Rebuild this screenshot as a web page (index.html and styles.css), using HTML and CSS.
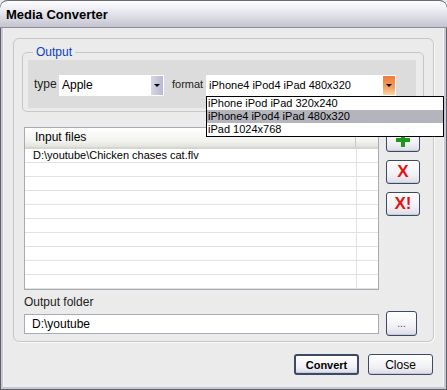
FILE: index.html
```html
<!DOCTYPE html>
<html lang="en">
<head>
    <meta charset="UTF-8">
    <title>Media Converter</title>
    <link rel="stylesheet" href="styles.css">
</head>
<body>
    <div class="window">
        <div class="titlebar">Media Converter</div>
        <div class="client">
            <div class="group">
                <fieldset class="output">
                    <legend>Output</legend>
                    <div class="output-row">
                        <span class="lbl lbl-type">type</span>
                        <div class="combo combo-type">
                            <span class="combo-text">Apple</span>
                            <span class="drop"><i></i></span>
                        </div>
                        <span class="lbl lbl-format">format</span>
                        <div class="combo combo-format">
                            <span class="combo-text">iPhone4 iPod4 iPad 480x320</span>
                            <span class="drop hot"><i></i></span>
                            <ul class="droplist">
                                <li>iPhone iPod iPad 320x240</li>
                                <li class="selected">iPhone4 iPod4 iPad 480x320</li>
                                <li>iPad 1024x768</li>
                            </ul>
                        </div>
                    </div>
                </fieldset>

                <div class="files-row">
                    <div class="listview">
                        <div class="lv-head">
                            <span class="lv-col">Input files</span>
                            <span class="lv-rest"></span>
                        </div>
                        <div class="lv-body">
                            <div class="lv-column">
                                <div class="lv-item">D:\youtube\Chicken chases cat.flv</div>
                            </div>
                        </div>
                    </div>
                    <div class="side-buttons">
                        <button class="btn side-btn">
                            <svg width="14" height="14" viewBox="0 0 14 14"><path d="M5 0h4v5h5v4H9v5H5V9H0V5h5z" fill="#1a9a1a"/></svg>
                        </button>
                        <button class="btn side-btn red">X</button>
                        <button class="btn side-btn red">X!</button>
                    </div>
                </div>

                <div class="folder-label">Output folder</div>
                <div class="folder-row">
                    <div class="textbox">D:\youtube</div>
                    <button class="btn browse">...</button>
                </div>
            </div>

            <div class="actions">
                <button class="btn action default">Convert</button>
                <button class="btn action">Close</button>
            </div>
        </div>
    </div>
</body>
</html>
```

FILE: styles.css
```css
body {
    margin: 0;
    background-color: #ebebeb;
    font-family: "Liberation Sans", Arial, sans-serif;
    font-size: 11px;
    color: #000;
}
.window {
    width: 447px;
    height: 390px;
    box-sizing: border-box;
    display: flex;
    flex-direction: column;
    background-color: #ebebeb;
    border: 1px solid #5f5f6a;
    border-top: none;
    border-radius: 8px 8px 0 0;
}
.titlebar {
    height: 28px;
    box-sizing: border-box;
    padding: 6px 0 0 6px;
    border-top: 1px solid #6a6a76;
    border-bottom: 1px solid #8e8e9a;
    border-radius: 8px 8px 0 0;
    background: linear-gradient(#ffffff, #e6e6ee 45%, #c4c4d0);
    font-size: 13px;
    font-weight: bold;
    margin: 0 -1px;
}
.client {
    flex: 1;
    border: 2px solid #c8c8d2;
    border-top: none;
    box-shadow: inset 1px 0 0 #f4f4f4, inset -1px 0 0 #f4f4f4;
    display: flex;
    flex-direction: column;
}
.group {
    margin: 10px 10px 0 10px;
    height: 304px;
    box-sizing: border-box;
    border: 1px solid #c6c6c6;
    border-radius: 6px;
    box-shadow: 1px 1px 0 #fafafa;
}
.output {
    margin: 7px 9px 0 8px;
    padding: 1px 7px 3px 5px;
    border: 1px solid #c6c6c6;
    border-radius: 5px;
}
.output legend {
    margin-left: 5px;
    padding: 0 3px;
    color: #0b3fbf;
    font-size: 12px;
    line-height: 13px;
}
.output-row {
    height: 48px;
    box-sizing: border-box;
    padding: 15px 0 0 6px;
    display: flex;
    align-items: flex-start;
    background-color: #dcdcdc;
}
.lbl {
    font-size: 12px;
    line-height: 19px;
    color: #222;
}
.lbl-type {
    width: 25px;
}
.lbl-format {
    margin-left: 8px;
    width: 34px;
    font-size: 11px;
}
.combo {
    position: relative;
    height: 21px;
    box-sizing: border-box;
    display: flex;
    background-color: #fff;
    padding: 1px;
}
.combo-type {
    width: 105px;
}
.combo-format {
    width: 190px;
}
.combo-text {
    flex: 1;
    padding-left: 2px;
    font-size: 12px;
    line-height: 19px;
}
.combo-format .combo-text {
    font-size: 11px;
}
.drop {
    width: 12px;
    display: flex;
    align-items: center;
    justify-content: center;
    background: linear-gradient(to right, #d6d6e6, #b8b8d0);
}
.drop.hot {
    background: linear-gradient(#f07a3a, #f4a060 60%, #fbd7a8);
}
.drop i {
    width: 0;
    height: 0;
    border-left: 3px solid transparent;
    border-right: 3px solid transparent;
    border-top: 3px solid #000;
}
.droplist {
    position: absolute;
    top: 100%;
    left: 0;
    width: 238px;
    margin: 0;
    padding: 0;
    list-style: none;
    background-color: #fff;
    border: 1px solid #000;
    box-sizing: border-box;
    z-index: 2;
}
.droplist li {
    font-size: 11px;
    line-height: 13px;
    padding-left: 1px;
}
.droplist li.selected {
    background-color: #b4b4bc;
}
.files-row {
    margin: 15px 0 0 10px;
    display: flex;
    gap: 7px;
}
.listview {
    width: 355px;
    height: 163px;
    box-sizing: border-box;
    border: 1px solid #a5acb5;
    background-color: #fff;
    display: flex;
    flex-direction: column;
}
.lv-head {
    height: 19px;
    display: flex;
    background: linear-gradient(#ffffff, #f2f2ee 70%, #e2e2dc);
    border-bottom: 2px solid #d6d6d0;
}
.lv-col {
    width: 320px;
    padding-left: 10px;
    font-size: 12px;
    line-height: 19px;
    border-right: 1px solid #c8c8c4;
}
.lv-rest {
    flex: 1;
}
.lv-body {
    flex: 1;
    display: flex;
    background: repeating-linear-gradient(#fff 0, #fff 13px, #e2e2e2 13px, #e2e2e2 14px);
}
.lv-column {
    width: 331px;
    border-right: 1px solid #e2e2e2;
}
.lv-item {
    padding-left: 8px;
    font-size: 11px;
    line-height: 13px;
}
.side-buttons {
    display: flex;
    flex-direction: column;
    gap: 8px;
    padding-top: 1px;
}
.btn {
    font-family: "Liberation Sans", Arial, sans-serif;
    border: 1px solid #3c4a66;
    border-radius: 3px;
    background: linear-gradient(#ffffff, #f2f2f6 60%, #dcdce6);
    box-shadow: inset 0 -1px 0 #c8c8da;
    padding: 0;
    color: #000;
}
.side-btn {
    width: 34px;
    height: 24px;
    display: flex;
    align-items: center;
    justify-content: center;
}
.side-btn.red {
    color: #e81010;
    font-size: 17px;
    font-weight: bold;
}
.folder-label {
    margin: 5px 0 0 10px;
    font-size: 12px;
    line-height: 15px;
    color: #222;
}
.folder-row {
    margin: 1px 0 0 10px;
    display: flex;
    align-items: center;
    gap: 7px;
}
.textbox {
    width: 355px;
    height: 20px;
    box-sizing: border-box;
    border: 1px solid #a5acb5;
    background-color: #fff;
    padding-left: 7px;
    font-size: 12px;
    line-height: 18px;
}
.browse {
    width: 31px;
    height: 25px;
    font-size: 10px;
    color: #444;
}
.actions {
    margin: 12px 11px 0 0;
    display: flex;
    justify-content: flex-end;
    gap: 9px;
}
.action {
    width: 65px;
    height: 21px;
    font-size: 12px;
}
.action.default {
    font-weight: bold;
    font-size: 11px;
    border-width: 2px;
}
```
